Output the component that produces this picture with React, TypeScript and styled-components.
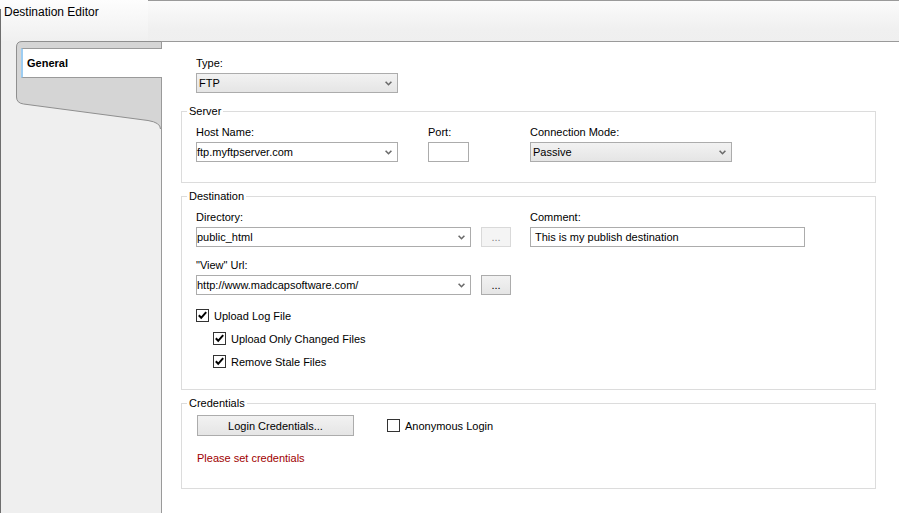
import React from "react";
import styled, { createGlobalStyle } from "styled-components";

const GlobalStyle = createGlobalStyle`
  html, body { margin: 0; padding: 0; background: #fff; }
  body {
    font-family: "Liberation Sans", Arial, sans-serif;
    font-size: 11px;
    color: #000;
  }
  * { box-sizing: border-box; }
`;

const Window = styled.div`
  width: 899px;
  height: 513px;
  display: flex;
  flex-direction: column;
  overflow: hidden;
  background: #fff;
`;

const Header = styled.div`
  display: flex;
  height: 41px;
  flex: none;
`;

const HeaderTitle = styled.div`
  width: 148px;
  padding: 4px 0 0 4px;
  background:
    linear-gradient(#6e6e6e, #6e6e6e) left 9px / 1px 100% no-repeat,
    linear-gradient(to bottom, #fdfdfd, #f0f0f0);
  font-size: 12px;
  line-height: 16px;
  white-space: nowrap;
`;

const HeaderBar = styled.div`
  flex: 1;
  border-top: 1px solid #9a9a9a;
  background: linear-gradient(to bottom, #fbfbfb 0%, #f0f0f0 70%, #efefef 100%);
`;

const Body = styled.div`
  flex: 1;
  display: flex;
  min-height: 0;
`;

const Sidebar = styled.div`
  width: 161px;
  flex: none;
  border-left: 1px solid #6e6e6e;
  background: #efefef;
  padding-left: 15px;
`;

const TabStrip = styled.div`
  position: relative;
  width: 145px;
  height: 90px;
  padding: 7px 0 0 5px;
`;

const StripShape = styled.svg`
  position: absolute;
  left: 0;
  top: 0;
  overflow: visible;
`;

const TabItem = styled.div`
  position: relative;
  z-index: 1;
  width: 141px;
  height: 30px;
  display: flex;
  align-items: center;
  padding-left: 4px;
  background: #fff;
  border-top: 1px solid #9a9a9a;
  border-bottom: 1px solid #9a9a9a;
  border-left: 2px solid #9dcdf2;
  font-weight: bold;
`;

const Content = styled.div`
  flex: 1;
  background: #fff;
  border-top: 1px solid #9a9a9a;
  border-left: 1px solid #9a9a9a;
  padding: 14px 23px 0 19px;
`;

const TypeSection = styled.div`
  padding-left: 15px;
`;

const Field = styled.div<{ $w: number; $ml?: number }>`
  display: flex;
  flex-direction: column;
  width: ${(p) => p.$w}px;
  margin-left: ${(p) => p.$ml ?? 0}px;
  flex: none;
`;

const Label = styled.div`
  line-height: 14px;
  margin-bottom: 3px;
  white-space: nowrap;
`;

const Row = styled.div<{ $mt?: number }>`
  display: flex;
  align-items: flex-start;
  margin-top: ${(p) => p.$mt ?? 0}px;
`;

const Combo = styled.div<{ $w: number; $list?: boolean }>`
  width: ${(p) => p.$w}px;
  height: 20px;
  display: flex;
  align-items: center;
  border: 1px solid #acacac;
  padding-left: ${(p) => (p.$list ? 2 : 0)}px;
  background: ${(p) =>
    p.$list ? "linear-gradient(to bottom, #f2f2f2, #e5e5e5)" : "#fff"};
  white-space: nowrap;
  flex: none;
`;

const ComboText = styled.span`
  flex: 1;
  line-height: 14px;
`;

const Chevron = styled.svg`
  margin-right: 5px;
  flex: none;
`;

const TextBox = styled.div<{ $w: number }>`
  width: ${(p) => p.$w}px;
  height: 20px;
  border: 1px solid #acacac;
  background: #fff;
  display: flex;
  align-items: center;
  padding-left: 4px;
  white-space: nowrap;
  flex: none;
`;

const PickRow = styled.div`
  display: flex;
  gap: 10px;
`;

const Button = styled.button<{ $w: number; $h: number }>`
  width: ${(p) => p.$w}px;
  height: ${(p) => p.$h}px;
  padding: 0;
  margin: 0;
  font-family: inherit;
  font-size: 11px;
  line-height: 14px;
  color: #000;
  border: 1px solid #acacac;
  border-radius: 0;
  background: linear-gradient(to bottom, #f2f2f2, #e5e5e5);
  flex: none;
  &:disabled {
    color: #838383;
    border-color: #d9d9d9;
    background: #f4f4f4;
  }
`;

const GroupBox = styled.fieldset<{ $mt: number }>`
  margin: ${(p) => p.$mt}px 0 0;
  padding: 0;
  min-width: 0;
  border: 1px solid #dcdcdc;
`;

const Legend = styled.legend`
  margin-left: 5px;
  padding: 0 2px;
  line-height: 14px;
  font-size: 11px;
`;

const GroupBody = styled.div<{ $pt: number; $pb: number }>`
  padding: ${(p) => p.$pt}px 0 ${(p) => p.$pb}px 14px;
`;

const CheckList = styled.div`
  margin-top: 9px;
  display: flex;
  flex-direction: column;
`;

const CheckRow = styled.label<{ $indent?: number }>`
  display: flex;
  align-items: center;
  gap: 5px;
  height: 23px;
  padding-left: ${(p) => p.$indent ?? 0}px;
  white-space: nowrap;
`;

const Box = styled.span`
  width: 13px;
  height: 13px;
  border: 1px solid #333;
  background: #fff;
  display: flex;
  align-items: center;
  justify-content: center;
  flex: none;
`;

const CredRow = styled.div`
  display: flex;
  align-items: center;
  gap: 33px;
  padding-left: 1px;
`;

const Warning = styled.div`
  margin-top: 14px;
  line-height: 14px;
  color: #a00000;
  padding-left: 1px;
`;

const ChevronIcon = () => (
  <Chevron width="7" height="5" viewBox="0 0 7 5">
    <polyline
      points="0.6,0.8 3.5,3.7 6.4,0.8"
      fill="none"
      stroke="#6a6a6a"
      strokeWidth="1.6"
    />
  </Chevron>
);

const Select = ({ w, value, list }: { w: number; value: string; list?: boolean }) => (
  <Combo $w={w} $list={list}>
    <ComboText>{value}</ComboText>
    <ChevronIcon />
  </Combo>
);

const Check = ({
  label,
  checked,
  indent,
}: {
  label: string;
  checked?: boolean;
  indent?: number;
}) => (
  <CheckRow $indent={indent}>
    <Box>
      {checked && (
        <svg width="11" height="11" viewBox="0 0 11 11">
          <polyline
            points="1.8,5.3 4.2,7.8 9.2,2.2"
            fill="none"
            stroke="#000"
            strokeWidth="2"
          />
        </svg>
      )}
    </Box>
    <span>{label}</span>
  </CheckRow>
);

export default function App() {
  return (
    <>
      <GlobalStyle />
      <Window>
        <Header>
          <HeaderTitle>Destination Editor</HeaderTitle>
          <HeaderBar />
        </Header>
        <Body>
          <Sidebar>
            <TabStrip>
              <StripShape width="145" height="90" viewBox="0 0 145 90">
                <path
                  d="M145 0.5 H6 Q0.5 0.5 0.5 6 V56 Q0.5 62 7.5 63 L132 79.5 Q144.5 81.5 144.5 88 L145 88 Z"
                  fill="#d5d5d5"
                />
                <path
                  d="M145 0.5 H6 Q0.5 0.5 0.5 6 V56 Q0.5 62 7.5 63 L132 79.5 Q144.5 81.5 144.5 88"
                  fill="none"
                  stroke="#8f8f8f"
                  strokeWidth="1"
                />
              </StripShape>
              <TabItem>General</TabItem>
            </TabStrip>
          </Sidebar>
          <Content>
            <TypeSection>
              <Field $w={202}>
                <Label>Type:</Label>
                <Select w={202} value="FTP" list />
              </Field>
            </TypeSection>

            <GroupBox $mt={11}>
              <Legend>Server</Legend>
              <GroupBody $pt={7} $pb={20}>
                <Row>
                  <Field $w={202}>
                    <Label>Host Name:</Label>
                    <Select w={202} value="ftp.myftpserver.com" />
                  </Field>
                  <Field $w={41} $ml={30}>
                    <Label>Port:</Label>
                    <TextBox $w={41} />
                  </Field>
                  <Field $w={202} $ml={61}>
                    <Label>Connection Mode:</Label>
                    <Select w={202} value="Passive" list />
                  </Field>
                </Row>
              </GroupBody>
            </GroupBox>

            <GroupBox $mt={6}>
              <Legend>Destination</Legend>
              <GroupBody $pt={7} $pb={16}>
                <Row>
                  <Field $w={315}>
                    <Label>Directory:</Label>
                    <PickRow>
                      <Select w={275} value="public_html" />
                      <Button $w={30} $h={20} disabled>
                        ...
                      </Button>
                    </PickRow>
                  </Field>
                  <Field $w={275} $ml={19}>
                    <Label>Comment:</Label>
                    <TextBox $w={275}>This is my publish destination</TextBox>
                  </Field>
                </Row>
                <Row $mt={11}>
                  <Field $w={315}>
                    <Label>"View" Url:</Label>
                    <PickRow>
                      <Select w={275} value="http://www.madcapsoftware.com/" />
                      <Button $w={30} $h={20}>...</Button>
                    </PickRow>
                  </Field>
                </Row>
                <CheckList>
                  <Check label="Upload Log File" checked />
                  <Check label="Upload Only Changed Files" checked indent={17} />
                  <Check label="Remove Stale Files" checked indent={17} />
                </CheckList>
              </GroupBody>
            </GroupBox>

            <GroupBox $mt={6}>
              <Legend>Credentials</Legend>
              <GroupBody $pt={4} $pb={23}>
                <CredRow>
                  <Button $w={157} $h={21}>Login Credentials...</Button>
                  <Check label="Anonymous Login" />
                </CredRow>
                <Warning>Please set credentials</Warning>
              </GroupBody>
            </GroupBox>
          </Content>
        </Body>
      </Window>
    </>
  );
}
